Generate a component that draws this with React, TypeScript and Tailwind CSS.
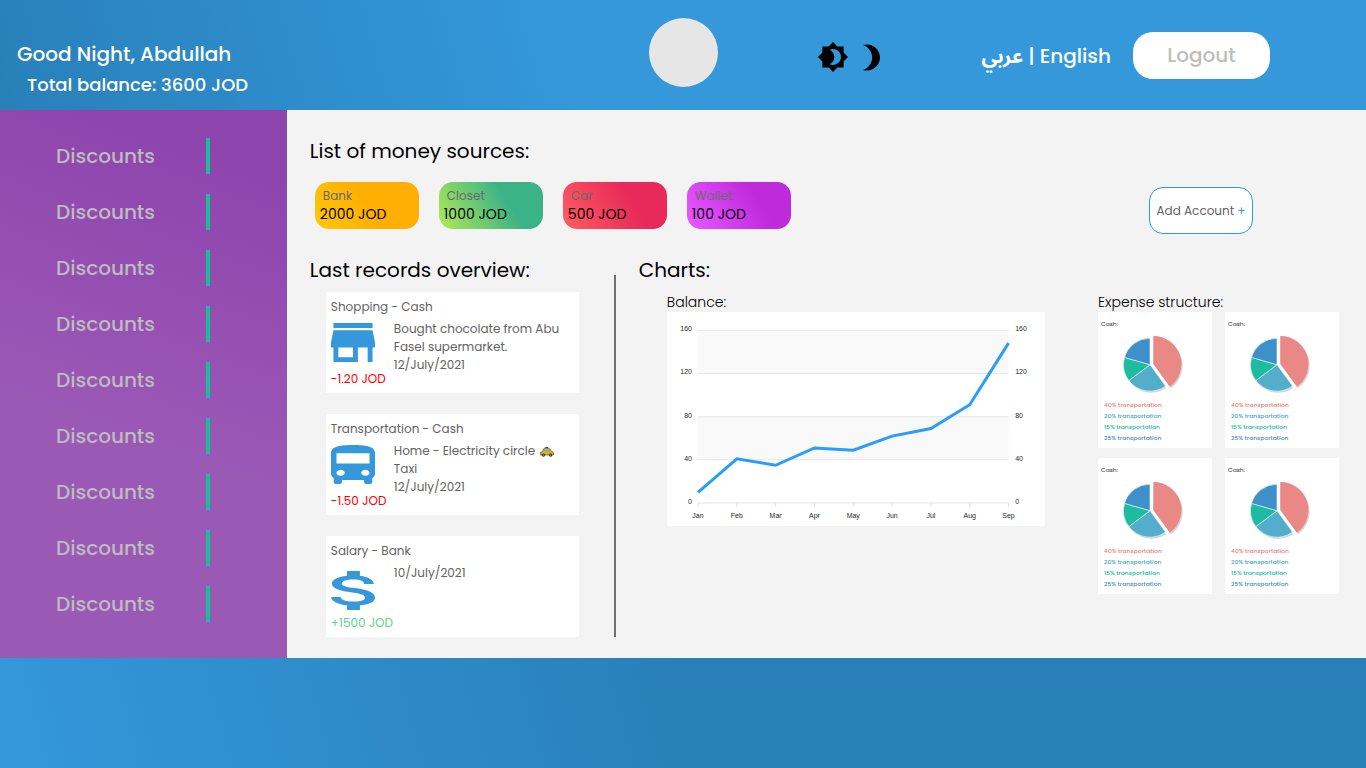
import React from "react";

type Source = { name: string; amount: string; tone: string };
type Entry = {
  title: string;
  lines: React.ReactNode[];
  date: string;
  amount: string;
  income?: boolean;
  box: string;
  path: string;
};

const sources: Source[] = [
  { name: "Bank", amount: "2000 JOD", tone: "bg-[linear-gradient(60deg,#ffc90a_0%,#ffae04_50%)]" },
  { name: "Closet", amount: "1000 JOD", tone: "bg-[linear-gradient(60deg,#a8e55a_5%,#3bb288_65%)]" },
  { name: "Car", amount: "500 JOD", tone: "bg-[linear-gradient(60deg,#ff5862_5%,#e72a5a_65%)]" },
  { name: "Wallet", amount: "100 JOD", tone: "bg-[linear-gradient(60deg,#e556ff_5%,#bf2adb_67%)]" },
];

function Taxi() {
  return (
    <svg className="ml-[2px] inline-block align-middle" width="14" height="10" viewBox="0 0 14 10" role="img" aria-label="taxi">
      <rect x="5.4" y="0" width="2.6" height="1.4" fill="#3a3a2a" />
      <path d="M0.4 8V5.4L2.2 4.6 3.8 1.6Q4 1.2 4.5 1.2H8.8Q9.3 1.2 9.6 1.6L11.4 4.3 13 4.9Q13.6 5.2 13.6 6V8Z" fill="#f2a516" stroke="#4b4021" strokeWidth="0.6" />
      <path d="M3.3 4.4L4.5 2.1H6.3V4.4ZM7 2.1H8.7L10.2 4.4H7Z" fill="#5fc3b8" />
      <circle cx="3.4" cy="8.1" r="1.7" fill="#1f3a2f" />
      <circle cx="10.6" cy="8.1" r="1.7" fill="#1f3a2f" />
      <circle cx="3.4" cy="8.1" r="0.6" fill="#b8d8c8" />
      <circle cx="10.6" cy="8.1" r="0.6" fill="#b8d8c8" />
    </svg>
  );
}

const entries: Entry[] = [
  {
    title: "Shopping - Cash",
    lines: ["Bought chocolate from Abu", "Fasel supermarket."],
    date: "12/July/2021",
    amount: "-1.20 JOD",
    box: "3 4 18 16",
    path: "M20 4H4v2h16V4zm1 10v-2l-1-5H4l-1 5v2h1v6h10v-6h4v6h2v-6h1zm-9 4H6v-4h6v4z",
  },
  {
    title: "Transportation - Cash",
    lines: [<>Home - Electricity circle <Taxi /></>, "Taxi"],
    date: "12/July/2021",
    amount: "-1.50 JOD",
    box: "4 2 16 19",
    path: "M4 16c0 .88.39 1.67 1 2.22V20c0 .55.45 1 1 1h1c.55 0 1-.45 1-1v-1h8v1c0 .55.45 1 1 1h1c.55 0 1-.45 1-1v-1.78c.61-.55 1-1.34 1-2.22V6c0-3.5-3.58-4-8-4s-8 .5-8 4v10zm3.5 1c-.83 0-1.5-.67-1.5-1.5S6.67 14 7.5 14s1.5.67 1.5 1.5S8.33 17 7.5 17zm9 0c-.83 0-1.5-.67-1.5-1.5s.67-1.5 1.5-1.5 1.5.67 1.5 1.5-.67 1.5-1.5 1.5zm1.5-6H6V6h12v5z",
  },
  {
    title: "Salary - Bank",
    lines: [],
    date: "10/July/2021",
    amount: "+1500 JOD",
    income: true,
    box: "6.3 3 10.2 18",
    path: "M11.8 10.9c-2.27-.59-3-1.2-3-2.15 0-1.09 1.01-1.85 2.7-1.85 1.78 0 2.44.85 2.5 2.1h2.21c-.07-1.72-1.12-3.3-3.21-3.81V3h-3v2.16c-1.94.42-3.5 1.68-3.5 3.61 0 2.31 1.91 3.46 4.7 4.13 2.5.6 3 1.48 3 2.41 0 .69-.49 1.79-2.7 1.79-2.06 0-2.87-.92-2.98-2.1h-2.2c.12 2.19 1.76 3.42 3.68 3.83V21h3v-2.15c1.95-.37 3.5-1.5 3.5-3.55 0-2.84-2.43-3.81-4.7-4.4z",
  },
];

const months = ["Jan", "Feb", "Mar", "Apr", "May", "Jun", "Jul", "Aug", "Sep"];
const balances = [10, 41, 35, 51, 49, 62, 69, 91, 148];
const ticks = [160, 120, 80, 40, 0];

const xAt = (i: number) => 31 + i * 38.8;
const yAt = (v: number) => 191 - v * 1.08;

function BalanceChart() {
  return (
    <svg viewBox="0 0 378 214" className="block h-auto w-full bg-white font-['Liberation_Sans',sans-serif]" role="img" aria-label="Balance by month">
      <rect x="31" y={yAt(160)} width="310.4" height="43.2" fill="#f9f9f9" />
      <rect x="31" y={yAt(80)} width="310.4" height="43.2" fill="#f9f9f9" />
      {ticks.map((t) => (
        <g key={t}>
          <line x1="31" x2="341.4" y1={yAt(t)} y2={yAt(t)} stroke="#e6e6e6" />
          <text x="25" y={yAt(t) + 1} textAnchor="end" fontSize="7" fill="#25292b">{t}</text>
          <text x="348" y={yAt(t) + 1} fontSize="7" fill="#25292b">{t}</text>
        </g>
      ))}
      {months.map((m, i) => (
        <g key={m}>
          <line x1={xAt(i)} x2={xAt(i)} y1="191" y2="195" stroke="#e0e0e0" />
          <text x={xAt(i)} y="206" textAnchor="middle" fontSize="7" fill="#25292b">{m}</text>
        </g>
      ))}
      <polyline points={balances.map((v, i) => `${xAt(i)},${yAt(v)}`).join(" ")} fill="none" stroke="#2a9dfb" strokeWidth="3" />
    </svg>
  );
}

function Pie() {
  return (
    <svg viewBox="3 0 64 60" width="64" height="60" aria-hidden="true">
      <g fill="#000" opacity="0.16" transform="translate(1.2 1.6)">
        <path d="M33.3 30V2A28 28 0 0 1 49.8 52.7Z" />
        <circle cx="30" cy="30.7" r="26.5" />
      </g>
      <path d="M30 30.7V1.5H33.5V30L50.5 53 46.5 55Z" fill="#fff" />
      <g stroke="#e4f2f4" strokeWidth="0.7">
        <path d="M30 30.7L45.6 52.1A26.5 26.5 0 0 1 8.8 46.6Z" fill="#52aeca" />
        <path d="M30 30.7L8.8 46.6A26.5 26.5 0 0 1 4.5 23.4Z" fill="#1dbc9f" />
        <path d="M30 30.7L4.5 23.4A26.5 26.5 0 0 1 30 4.2Z" fill="#3e90ca" />
      </g>
      <path d="M33.3 30V2A28 28 0 0 1 49.8 52.7Z" fill="#ea8885" />
    </svg>
  );
}

function ExpenseCard() {
  return (
    <article className="flex h-[136px] flex-col bg-white pt-2">
      <h4 className="pl-[3px] text-[6px] leading-2 text-[#333]">Cash:</h4>
      <div className="flex justify-center pt-[6px]">
        <Pie />
      </div>
      <ul className="pt-[6px] pl-[6px] text-[6px] leading-[11px] font-medium">
        <li className="text-[#ea7c79]">40% transportation</li>
        <li className="text-[#45a8c8]">20% transportation</li>
        <li className="text-[#1abc9c]">15% transportation</li>
        <li className="text-[#3e90ca]">25% transportation</li>
      </ul>
    </article>
  );
}

function RecordCard({ entry }: { entry: Entry }) {
  return (
    <li className="w-[253px] bg-white px-[5px] pt-[6px] pb-[5px] text-xs leading-[18px] text-[#636363]">
      <h3>{entry.title}</h3>
      <div className="mt-1 flex gap-[19px]">
        <div className="w-11 shrink-0 pt-[3px]">
          <div className={entry.income ? "flex h-[43px] items-end" : "flex h-[43px] items-start"}>
            <svg className="h-[39px] w-11 fill-[#3498db]" viewBox={entry.box} preserveAspectRatio="none" aria-hidden="true">
              <path d={entry.path} />
            </svg>
          </div>
          <p className={entry.income ? "mt-1 whitespace-nowrap text-[#5fd38d]" : "mt-1 whitespace-nowrap text-[#ff0000]"}>{entry.amount}</p>
        </div>
        <div className="whitespace-nowrap">
          {entry.lines.map((line, i) => (
            <p key={i} className="h-[18px]">{line}</p>
          ))}
          <p>{entry.date}</p>
        </div>
      </div>
    </li>
  );
}

export default function App() {
  return (
    <div className="flex min-h-screen flex-col bg-[#f3f3f3] font-['Poppins','Inter',sans-serif] text-black">
      <header className="grid h-[110px] grid-cols-[minmax(0,1fr)_auto_minmax(0,1fr)] items-center bg-[linear-gradient(75deg,#2980b9_0%,#3498db_42%)] text-white">
        <div className="pt-7 pl-[17px] font-medium">
          <h1 className="text-xl leading-8">Good Night, Abdullah</h1>
          <p className="pl-[10px] text-[18px] leading-[30px]">Total balance: 3600 JOD</p>
        </div>
        <div className="mb-[5px] size-[69px] rounded-full bg-[#e6e6e6]" />
        <div className="flex items-center pr-24 pl-[100px]">
          <div className="flex items-center gap-[15px] pt-1">
            <button type="button" aria-label="Automatic brightness">
              <svg className="block size-[30px]" viewBox="0.69 0.69 22.62 22.62" fill="#000" aria-hidden="true">
                <path d="M20 8.69V4h-4.69L12 .69 8.69 4H4v4.69L.69 12 4 15.31V20h4.69L12 23.31 15.31 20H20v-4.69L23.31 12 20 8.69zM12 18c-.89 0-1.74-.2-2.5-.55C11.56 16.5 13 14.42 13 12s-1.44-4.5-3.5-5.45C10.26 6.2 11.11 6 12 6c3.31 0 6 2.69 6 6s-2.69 6-6 6z" />
              </svg>
            </button>
            <button type="button" aria-label="Night mode">
              <svg className="block h-[27px] w-[17px]" viewBox="6 2 13 20" fill="#000" aria-hidden="true">
                <path d="M9 2c-1.05 0-2.05.16-3 .46 4.06 1.27 7 5.06 7 9.54 0 4.48-2.94 8.27-7 9.54.95.3 1.95.46 3 .46 5.52 0 10-4.48 10-10S14.52 2 9 2z" />
              </svg>
            </button>
          </div>
          <div className="ml-auto flex items-center gap-[5px] pt-[2px] text-xl font-medium whitespace-nowrap">
            <a href="#ar" lang="ar" className="pt-[2px] font-['Noto_Sans_Arabic','DejaVu_Sans',sans-serif] font-bold">عربي</a>
            <span>|</span>
            <a href="#en">English</a>
          </div>
          <button type="button" className="ml-[22px] h-[47px] w-[137px] shrink-0 rounded-[20px] bg-white text-xl font-medium text-[#bdbdbd]">
            Logout
          </button>
        </div>
      </header>

      <div className="flex">
        <nav className="w-[21%] shrink-0 bg-[linear-gradient(20deg,#9b59b6_40%,#8e44ad_90%)] pt-[18px]">
          <ul>
            {Array.from({ length: 9 }, (_, i) => (
              <li key={i}>
                <a href="#discounts" className="flex h-14 items-center justify-between pr-[77px] pl-14 text-xl font-medium text-[#bdbdbd]">
                  Discounts
                  <span className="h-9 w-1 bg-[#1abc9c]" />
                </a>
              </li>
            ))}
          </ul>
        </nav>

        <main className="min-w-0 flex-1 pt-[26px] pr-[27px] pb-[21px] pl-[23px]">
          <h2 className="text-xl leading-[30px]">List of money sources:</h2>
          <div className="mt-4 flex items-start justify-between pr-[86px] pl-[5px]">
            <ul className="flex gap-5">
              {sources.map((s) => (
                <li key={s.name} className={`h-[47px] w-[104px] rounded-[14px] pt-[5px] pl-[5px] ${s.tone}`}>
                  <p className="pl-[3px] text-xs leading-[18px] text-[#6a6a6a]">{s.name}</p>
                  <p className="text-sm leading-[18px]">{s.amount}</p>
                </li>
              ))}
            </ul>
            <button type="button" className="mt-[5px] h-[47px] w-[104px] rounded-[14px] border border-[#3498db] bg-white text-xs whitespace-nowrap text-[#636363]">
              Add Account <span className="text-[#3498db]">+</span>
            </button>
          </div>

          <div className="mt-[21px] flex">
            <section className="shrink-0">
              <h2 className="text-xl leading-[30px]">Last records overview:</h2>
              <ul className="mt-[7px] flex flex-col gap-[21px] pl-4">
                {entries.map((e) => (
                  <RecordCard key={e.title} entry={e} />
                ))}
              </ul>
            </section>
            <div className="mt-5 ml-[35px] w-[2px] shrink-0 bg-[#707070]" />
            <section className="ml-[23px] min-w-0 flex-1">
              <h2 className="text-xl leading-[30px]">Charts:</h2>
              <div className="mt-[7px] flex items-start gap-[53px] pl-7">
                <div className="min-w-0 flex-1">
                  <h3 className="text-sm leading-5 font-light">Balance:</h3>
                  <BalanceChart />
                </div>
                <div className="w-[241px] shrink-0">
                  <h3 className="text-sm leading-5 font-light">Expense structure:</h3>
                  <div className="grid grid-cols-2 gap-x-[13px] gap-y-[10px]">
                    {[0, 1, 2, 3].map((i) => (
                      <ExpenseCard key={i} />
                    ))}
                  </div>
                </div>
              </div>
            </section>
          </div>
        </main>
      </div>

      <footer className="min-h-[110px] flex-1 bg-[linear-gradient(75deg,#3498db_0%,#2980b9_50%)]" />
    </div>
  );
}
